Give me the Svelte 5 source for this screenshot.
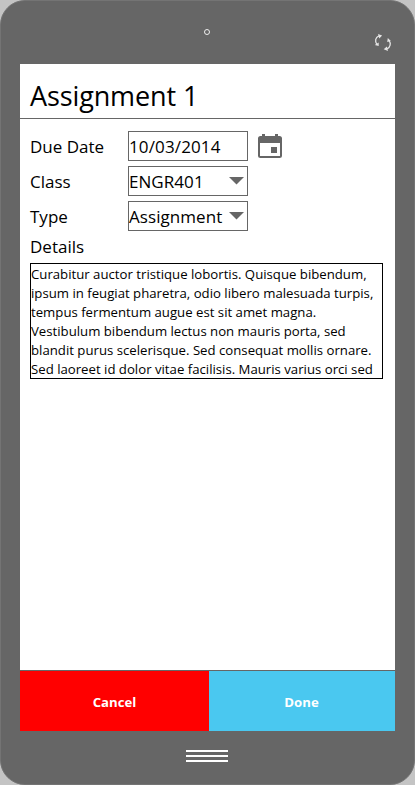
<script>
  const fields = [
    { label: 'Due Date', value: '10/03/2014', kind: 'date' },
    { label: 'Class', value: 'ENGR401', kind: 'select' },
    { label: 'Type', value: 'Assignment', kind: 'select' }
  ];
  const details = [
    'Curabitur auctor tristique lobortis. Quisque bibendum,',
    'ipsum in feugiat pharetra, odio libero malesuada turpis,',
    'tempus fermentum augue est sit amet magna.',
    'Vestibulum bibendum lectus non mauris porta, sed',
    'blandit purus scelerisque. Sed consequat mollis ornare.',
    'Sed laoreet id dolor vitae facilisis. Mauris varius orci sed'
  ];
</script>

<div class="phone">
  <div class="top">
    <span class="camera"></span>
    <svg class="rotate" width="18" height="18" viewBox="0 0 18 18" fill="none" stroke="#e4e4e4" stroke-width="1.3">
      <path d="M5 1.9C1.2 3.5.8 7 2.8 10.1M13 14.9C16.500 13 17.2 9.3 14.9 6.3" />
      <path d="M4 0l4.1 1.6-2.8 3zM4.7 8.4v3.7L.7 11zM13.2 8l.6-4 3.1 3zM14 16.900l-4.3-1.6 3.1-2.8z" fill="#e4e4e4" stroke="none" />
    </svg>
  </div>

  <main class="screen">
    <h1>Assignment 1</h1>
    <div class="form">
      {#each fields as field}
        <div class="row">
          <span class="label">{field.label}</span>
          <div class="box">
            <span class={field.kind}>{field.value}</span>
            {#if field.kind === 'select'}
              <svg class="arrow" width="15" height="8" viewBox="0 0 15 8"><path d="M0 0h15L7.5 7.5z" fill="#666" /></svg>
            {/if}
          </div>
          {#if field.kind === 'date'}
            <svg class="calendar" width="24" height="24" viewBox="0 0 24 24">
              <path fill="#666" fill-rule="evenodd" d="M4 0h3v2h10V0h3v2h1.500Q24 2 24 4.500v17Q24 24 21.500 24h-19Q0 24 0 21.500v-17Q0 2 2.500 2H4zM2 9v13h20V9zM13 13h6v6h-6z" />
            </svg>
          {/if}
        </div>
      {/each}
      <div class="details-label">Details</div>
      <div class="details">
        {#each details as line}<div>{line}</div>{/each}
      </div>
    </div>
    <div class="actions">
      <button class="cancel">Cancel</button>
      <button class="done">Done</button>
    </div>
  </main>

  <div class="home"><i></i><i></i><i></i></div>
</div>

<style>
  :global(body) { background: #c4c4c4; }
  .phone {
    box-sizing: border-box;
    width: 415px;
    height: 785px;
    padding: 0 19px;
    border: 1px solid #747474;
    border-radius: 25px;
    background: #666;
    display: flex;
    flex-direction: column;
    overflow: hidden;
    color: #000;
    font-family: "Open Sans", "Noto Sans", sans-serif;
  }
  .top {
    height: 63px;
    flex: none;
    display: grid;
    grid-template-columns: 1fr 7px 1fr;
  }
  .camera {
    grid-column: 2;
    box-sizing: border-box;
    width: 6px;
    height: 6px;
    margin-top: 28px;
    border: 1px solid #eee;
    border-radius: 50%;
  }
  .rotate { justify-self: end; margin: 33px 3px 0 0; }
  .screen {
    width: 375px;
    height: 667px;
    flex: none;
    background: #fff;
    display: flex;
    flex-direction: column;
  }
  h1 {
    box-sizing: border-box;
    height: 55px;
    margin: 0;
    padding: 13px 10px 0;
    border-bottom: 1px solid #666;
    font-size: 27px;
    line-height: 38px;
    letter-spacing: -0.12px;
    font-weight: 400;
    white-space: nowrap;
  }
  .form { flex: 1; padding: 12px 12px 0 10px; }
  .row {
    height: 30px;
    margin-bottom: 5px;
    display: flex;
    align-items: center;
    font-size: 17px;
    line-height: 30px;
    white-space: nowrap;
  }
  .label { width: 98px; padding-top: 2px; line-height: 28px; }
  .box {
    box-sizing: border-box;
    width: 120px;
    height: 30px;
    border: 1px solid #666;
    display: flex;
    justify-content: space-between;
  }
  .date { letter-spacing: 0.13px; }
  .select { letter-spacing: 0.06px; }
  .arrow { margin: 10px 3px 0 0; flex: none; }
  .calendar { margin-left: 10px; }
  .details-label { height: 27px; font-size: 17px; line-height: 22px; }
  .details {
    box-sizing: border-box;
    width: 353px;
    height: 116px;
    padding-top: 1px;
    border: 1px solid #000;
    overflow: hidden;
    font-size: 13.2px;
    line-height: 19px;
    white-space: nowrap;
  }
  .actions { display: flex; height: 60px; border-top: 1px solid #666; }
  button {
    border: 0;
    padding: 2px 0 0;
    color: #fff;
    font: 700 13.2px/58px "Open Sans", "Noto Sans", sans-serif;
  }
  .cancel { width: 189px; background: #f00; }
  .done { flex: 1; background: #4ac8f0; padding-right: 1px; }
  .home {
    width: 42px;
    margin: 19px 0 0 166px;
    display: flex;
    flex-direction: column;
    gap: 3px;
  }
  .home i { height: 2px; background: #fff; }
</style>
